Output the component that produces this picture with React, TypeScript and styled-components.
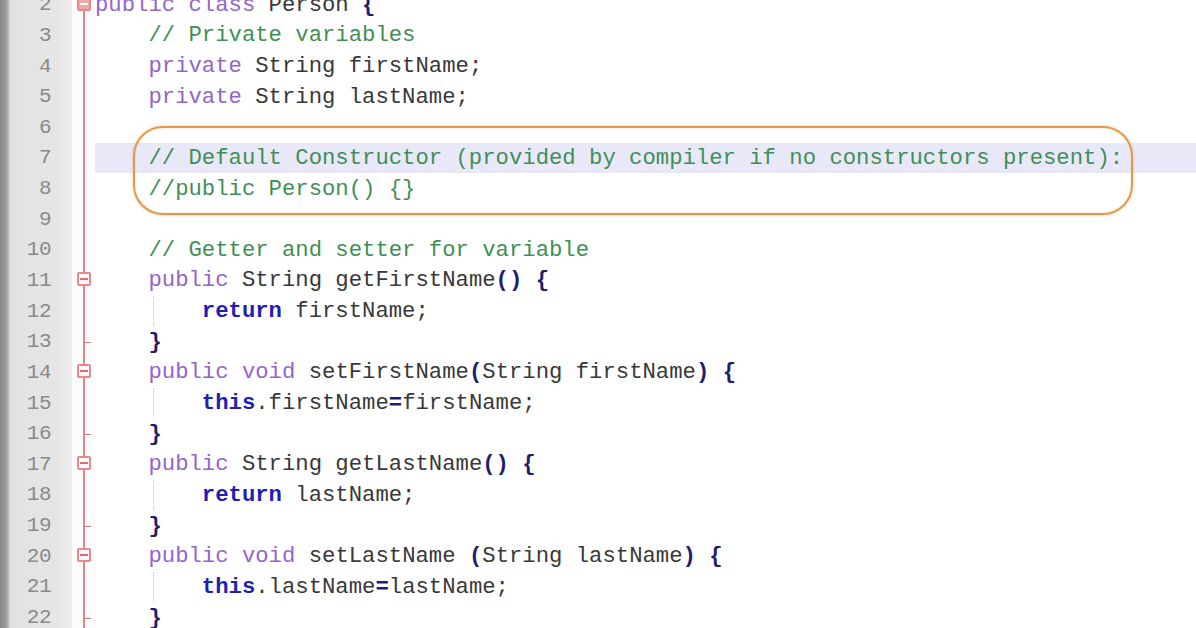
import React from "react";
import styled, { createGlobalStyle, css } from "styled-components";

const Global = createGlobalStyle`
  html, body { margin: 0; padding: 0; background: #ffffff; }
  body { width: 1196px; height: 628px; overflow: hidden; }
`;

const LINE_H = 30.65;
const CHAR_W = 13.35;

type Kind = "kw" | "plain" | "op" | "flow" | "comment";
type Tok = [Kind, string];
type Fold = "open" | "openTop" | "end" | undefined;

interface Line {
  n: number;
  toks: Tok[];
  fold?: Fold;
  guide?: boolean;
  current?: boolean;
}

const lines: Line[] = [
  { n: 2, fold: "openTop", toks: [["kw", "public"], ["plain", " "], ["kw", "class"], ["plain", " Person "], ["op", "{"]] },
  { n: 3, toks: [["plain", "    "], ["comment", "// Private variables"]] },
  { n: 4, toks: [["plain", "    "], ["kw", "private"], ["plain", " String firstName;"]] },
  { n: 5, toks: [["plain", "    "], ["kw", "private"], ["plain", " String lastName;"]] },
  { n: 6, toks: [] },
  { n: 7, current: true, toks: [["plain", "    "], ["comment", "// Default Constructor (provided by compiler if no constructors present):"]] },
  { n: 8, toks: [["plain", "    "], ["comment", "//public Person() {}"]] },
  { n: 9, toks: [] },
  { n: 10, toks: [["plain", "    "], ["comment", "// Getter and setter for variable"]] },
  { n: 11, fold: "open", toks: [["plain", "    "], ["kw", "public"], ["plain", " String getFirstName"], ["op", "()"], ["plain", " "], ["op", "{"]] },
  { n: 12, guide: true, toks: [["plain", "        "], ["flow", "return"], ["plain", " firstName;"]] },
  { n: 13, fold: "end", toks: [["plain", "    "], ["op", "}"]] },
  { n: 14, fold: "open", toks: [["plain", "    "], ["kw", "public"], ["plain", " "], ["kw", "void"], ["plain", " setFirstName"], ["op", "("], ["plain", "String firstName"], ["op", ")"], ["plain", " "], ["op", "{"]] },
  { n: 15, guide: true, toks: [["plain", "        "], ["flow", "this"], ["plain", ".firstName"], ["op", "="], ["plain", "firstName;"]] },
  { n: 16, fold: "end", toks: [["plain", "    "], ["op", "}"]] },
  { n: 17, fold: "open", toks: [["plain", "    "], ["kw", "public"], ["plain", " String getLastName"], ["op", "()"], ["plain", " "], ["op", "{"]] },
  { n: 18, guide: true, toks: [["plain", "        "], ["flow", "return"], ["plain", " lastName;"]] },
  { n: 19, fold: "end", toks: [["plain", "    "], ["op", "}"]] },
  { n: 20, fold: "open", toks: [["plain", "    "], ["kw", "public"], ["plain", " "], ["kw", "void"], ["plain", " setLastName "], ["op", "("], ["plain", "String lastName"], ["op", ")"], ["plain", " "], ["op", "{"]] },
  { n: 21, guide: true, toks: [["plain", "        "], ["flow", "this"], ["plain", ".lastName"], ["op", "="], ["plain", "lastName;"]] },
  { n: 22, fold: "end", toks: [["plain", "    "], ["op", "}"]] },
];

const Editor = styled.div`
  position: relative;
  width: 1196px;
  height: 628px;
  overflow: hidden;
  background: #ffffff;
`;

const Lines = styled.div`
  display: flex;
  flex-direction: column;
  margin-top: -10.6px;
`;

const Row = styled.div`
  display: grid;
  grid-template-columns: 10px 62px 23px 1fr;
  height: ${LINE_H}px;
  align-items: stretch;
`;

const Strip = styled.div`
  background: linear-gradient(90deg, #8a8a8a 0px, #9a9a9a 6px, #c4c4c4 9px, #d8d8d8 10px);
`;

const Num = styled.div`
  background: linear-gradient(90deg, #e2e2e2 0px, #e6e6e6 50px, #eeeeee 62px);
  color: #8a8a8a;
  font-family: "Liberation Mono", "Courier New", monospace;
  font-size: 21px;
  display: flex;
  align-items: center;
  justify-content: flex-end;
  padding-right: 21px;
  letter-spacing: -0.5px;
`;

const FoldCell = styled.div`
  position: relative;
  background: #fcfcfc;
  &::before {
    content: "";
    position: absolute;
    left: 11px;
    top: 0;
    bottom: 0;
    width: 2px;
    background: #e58585;
  }
`;

const FoldBox = styled.div<{ $top?: boolean }>`
  position: absolute;
  left: 5px;
  top: 50%;
  box-sizing: border-box;
  width: 14px;
  height: 14px;
  margin-top: -8px;
  border: 2px solid #e48a8a;
  border-radius: 2px;
  background: ${(p) => (p.$top ? "#f0a8a8" : "#fff8f8")};
  &::after {
    content: "";
    position: absolute;
    left: 1px;
    right: 1px;
    top: 50%;
    height: 2px;
    margin-top: -1px;
    background: ${(p) => (p.$top ? "#ffffff" : "#d87070")};
  }
`;

const FoldEnd = styled.div`
  position: absolute;
  left: 12px;
  top: 50%;
  width: 7px;
  height: 1.5px;
  background: #d48080;
`;

const Code = styled.div<{ $current?: boolean; $guide?: boolean }>`
  position: relative;
  display: flex;
  align-items: center;
  white-space: pre;
  font-family: "Liberation Mono", "Courier New", monospace;
  font-size: 22.25px;
  color: #3a3a3a;
  ${(p) =>
    p.$current &&
    css`
      background: #e8e8f8;
    `}
  ${(p) =>
    p.$guide &&
    css`
      &::before {
        content: "";
        position: absolute;
        left: ${4 * CHAR_W + 5}px;
        top: 0;
        bottom: 0;
        border-left: 1px dotted #c8c8c8;
      }
    `}
`;

const Tok = styled.span<{ $kind: Kind }>`
  ${(p) => {
    switch (p.$kind) {
      case "kw":
        return css`color: #9464cc;`;
      case "flow":
        return css`color: #1f1fb0; font-weight: bold;`;
      case "op":
        return css`color: #1e1e6e; font-weight: bold;`;
      case "comment":
        return css`color: #3f8f55;`;
      default:
        return css`color: #383838;`;
    }
  }}
`;

const Callout = styled.div`
  position: absolute;
  left: 133px;
  top: 126px;
  width: 1000px;
  height: 89px;
  box-sizing: border-box;
  border: 2.5px solid #e29a48;
  border-radius: 30px;
  box-shadow: 0 0 3px rgba(226, 154, 72, 0.5), inset 0 0 2px rgba(226, 154, 72, 0.35);
  pointer-events: none;
`;

export default function App() {
  return (
    <>
      <Global />
      <Editor>
        <Lines>
          {lines.map((l) => (
            <Row key={l.n}>
              <Strip />
              <Num>{l.n}</Num>
              <FoldCell>
                {l.fold === "open" && <FoldBox />}
                {l.fold === "openTop" && <FoldBox $top />}
                {l.fold === "end" && <FoldEnd />}
              </FoldCell>
              <Code $current={l.current} $guide={l.guide}>
                {l.toks.map((t, i) => (
                  <Tok key={i} $kind={t[0]}>
                    {t[1]}
                  </Tok>
                ))}
              </Code>
            </Row>
          ))}
        </Lines>
        <Callout />
      </Editor>
    </>
  );
}
